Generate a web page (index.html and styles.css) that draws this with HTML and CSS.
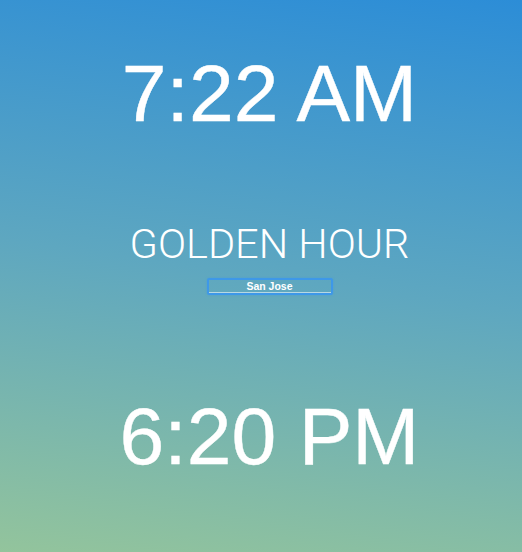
FILE: index.html
```html
<!DOCTYPE html>
<html>
<head>
<meta charset="utf-8">
<link rel="stylesheet" href="styles.css">
</head>
<body>
<main class="screen">
  <div class="time time-rise">7:22 AM</div>
  <div class="title">GOLDEN HOUR</div>
  <div class="city-input">San Jose</div>
  <div class="time time-set">6:20 PM</div>
</main>
</body>
</html>
```
FILE: styles.css
```css
html, body {
  margin: 0;
  padding: 0;
  height: 100%;
}
body {
  background: linear-gradient(188deg, #2c8dd7 0%, #5ea7c0 50%, #93c49c 100%);
  overflow: hidden;
}
.screen {
  box-sizing: border-box;
  width: 522px;
  height: 552px;
  padding-left: 17px;
  display: flex;
  flex-direction: column;
  align-items: center;
  color: #ffffff;
}
.time {
  font-family: "Liberation Sans", Arial, sans-serif;
  font-size: 80.5px;
  line-height: 80.5px;
  white-space: nowrap;
  -webkit-text-stroke: 0.4px #ffffff;
}
.time-rise {
  margin-top: 52.5px;
}
.title {
  margin-top: 89.5px;
  font-family: Roboto, "Noto Sans", sans-serif;
  font-weight: 300;
  font-size: 41.5px;
  line-height: 41.5px;
  white-space: nowrap;
}
.city-input {
  margin-top: 14px;
  box-sizing: border-box;
  width: 126px;
  height: 17px;
  border: 2px solid #3e98e8;
  border-radius: 2px;
  box-shadow: inset 0 -1px 0 rgba(255,255,255,0.55), 0 0 2px rgba(62,152,232,0.6);
  font-family: "Liberation Sans", Arial, sans-serif;
  font-weight: bold;
  font-size: 10.5px;
  line-height: 13px;
  text-align: center;
}
.time-set {
  margin-top: 101px;
}
```
